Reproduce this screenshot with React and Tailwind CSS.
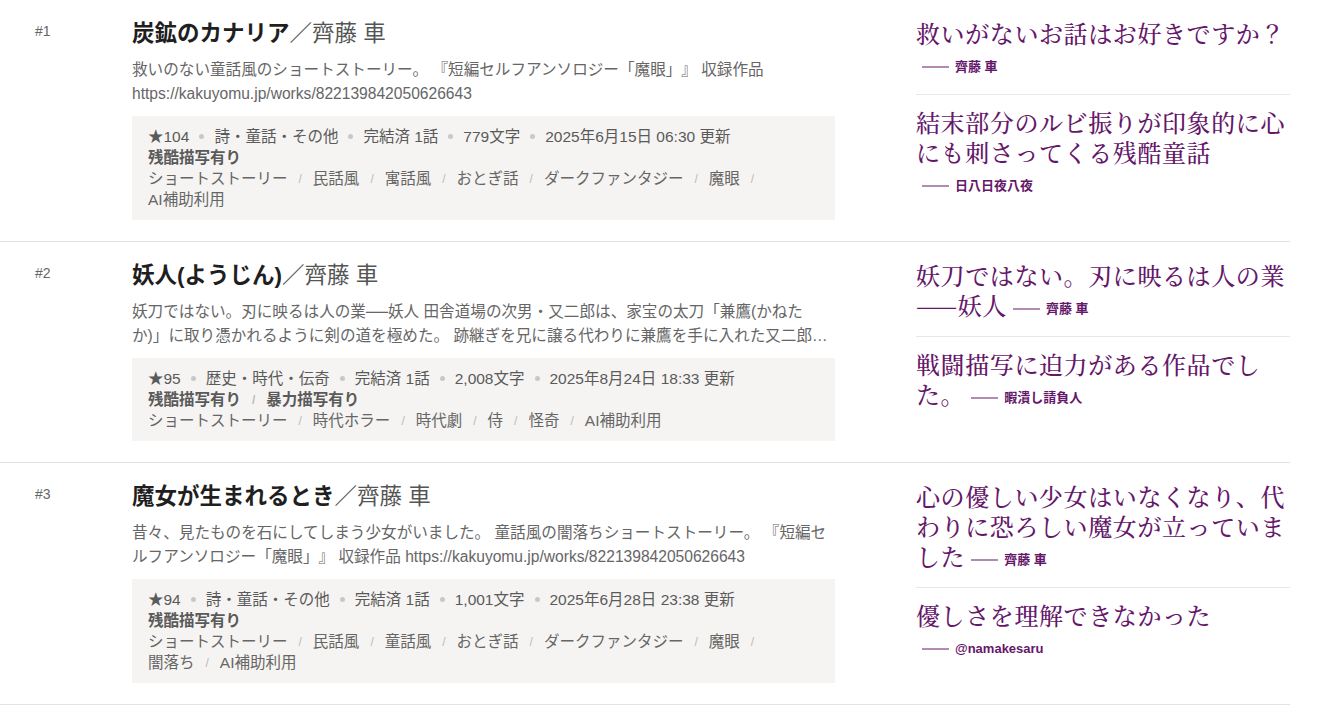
const works = [
  {
    rank: 1,
    title: "炭鉱のカナリア",
    author: "齊藤 車",
    desc: "救いのない童話風のショートストーリー。 『短編セルフアンソロジー「魔眼」』 収録作品 https://kakuyomu.jp/works/822139842050626643",
    meta: ["★104", "詩・童話・その他", "完結済 1話", "779文字", "2025年6月15日 06:30 更新"],
    warnings: ["残酷描写有り"],
    tags: ["ショートストーリー", "民話風", "寓話風", "おとぎ話", "ダークファンタジー", "魔眼", "AI補助利用"],
    reviews: [
      { text: "救いがないお話はお好きですか？", by: "齊藤 車" },
      { text: "結末部分のルビ振りが印象的に心にも刺さってくる残酷童話", by: "日八日夜八夜" },
    ],
  },
  {
    rank: 2,
    title: "妖人(ようじん)",
    author: "齊藤 車",
    desc: "妖刀ではない。刃に映るは人の業──妖人 田舎道場の次男・又二郎は、家宝の太刀「兼鷹(かねたか)」に取り憑かれるように剣の道を極めた。 跡継ぎを兄に譲る代わりに兼鷹を手に入れた又二郎は、やがて人斬りとして恐れられるようになる。",
    meta: ["★95", "歴史・時代・伝奇", "完結済 1話", "2,008文字", "2025年8月24日 18:33 更新"],
    warnings: ["残酷描写有り", "暴力描写有り"],
    tags: ["ショートストーリー", "時代ホラー", "時代劇", "侍", "怪奇", "AI補助利用"],
    reviews: [
      { text: "妖刀ではない。刃に映るは人の業——妖人", by: "齊藤 車" },
      { text: "戦闘描写に迫力がある作品でした。", by: "暇潰し請負人" },
    ],
  },
  {
    rank: 3,
    title: "魔女が生まれるとき",
    author: "齊藤 車",
    desc: "昔々、見たものを石にしてしまう少女がいました。 童話風の闇落ちショートストーリー。 『短編セルフアンソロジー「魔眼」』 収録作品 https://kakuyomu.jp/works/822139842050626643",
    meta: ["★94", "詩・童話・その他", "完結済 1話", "1,001文字", "2025年6月28日 23:38 更新"],
    warnings: ["残酷描写有り"],
    tags: ["ショートストーリー", "民話風", "童話風", "おとぎ話", "ダークファンタジー", "魔眼", "闇落ち", "AI補助利用"],
    reviews: [
      { text: "心の優しい少女はいなくなり、代わりに恐ろしい魔女が立っていました", by: "齊藤 車" },
      { text: "優しさを理解できなかった", by: "@namakesaru" },
    ],
  },
];

function Slash() {
  return <span className="mx-[11px] text-[12px] leading-none text-[#bbbbbb]">/</span>;
}

function Review({ text, by, first }) {
  return (
    <div className={first ? "pb-[16px]" : "pt-[12px] pb-[14px]"}>
      <p className="font-['Noto_Serif_CJK_JP','Liberation_Serif','Noto_Sans_CJK_JP',serif] text-[24px] font-medium leading-[30px] tracking-[0.6px] text-[#65176a]">
        {text}
        <span className="ml-[6px] inline-flex items-center gap-[6px] align-middle tracking-normal">
          <span className="inline-block h-[2px] w-[27px] bg-[#65176a]/50" />
          <span className="font-['Liberation_Sans','Noto_Sans_CJK_JP',sans-serif] text-[13px] font-bold leading-[20px]">
            {by}
          </span>
        </span>
      </p>
    </div>
  );
}

function WorkRow({ work }) {
  return (
    <div className="flex border-b border-[#e3e3e3] pt-5 pb-[21px]">
      {/* rank */}
      <div className="w-[132px] shrink-0 pl-[35px] pt-[1px] text-[14px] leading-[20px] text-[#666]">
        #{work.rank}
      </div>

      {/* main */}
      <div className="w-[703px] shrink-0">
        <h2 className="text-[22.5px] leading-[28px]">
          <span className="font-bold text-[#1f1f1f]">{work.title}</span>
          <span className="text-[#555]">／{work.author}</span>
        </h2>
        <p className="mt-[10px] line-clamp-2 break-words text-[15.6px] leading-[24px] text-[#666]">
          {work.desc}
        </p>

        <div className="mt-[10px] bg-[#f5f4f2] px-4 py-[10px] text-[15.5px] leading-[21px] text-[#5a5a5a]">
          <div className="flex h-[21px] flex-wrap items-center">
            {work.meta.map((m, i) => (
              <span key={m} className="flex items-center">
                {i > 0 && <span className="mx-[10px] inline-block h-[5px] w-[5px] rounded-full bg-[#c8c8c8]" />}
                {m}
              </span>
            ))}
          </div>
          <div className="flex flex-wrap items-center font-bold">
            {work.warnings.map((w, i) => (
              <span key={w} className="flex h-[21px] items-center">
                {i > 0 && <Slash />}
                {w}
              </span>
            ))}
          </div>
          <div className="flex flex-wrap text-[#666]">
            {work.tags.map((t, i) => (
              <span key={t} className="flex h-[21px] items-center">
                {t}
                {i < work.tags.length - 1 && <Slash />}
              </span>
            ))}
          </div>
        </div>
      </div>

      {/* reviews */}
      <div className="-mt-[2px] ml-[81px] w-[374px] shrink-0 divide-y divide-[#e8e8e8]">
        {work.reviews.map((r, i) => (
          <Review key={i} {...r} first={i === 0} />
        ))}
      </div>
    </div>
  );
}

export default function App() {
  return (
    <div className="min-h-screen bg-white font-['Liberation_Sans','Noto_Sans_CJK_JP',sans-serif] [text-spacing-trim:space-all]">
      <div className="w-[1290px]">
        {works.map((w) => (
          <WorkRow key={w.rank} work={w} />
        ))}
      </div>
    </div>
  );
}
